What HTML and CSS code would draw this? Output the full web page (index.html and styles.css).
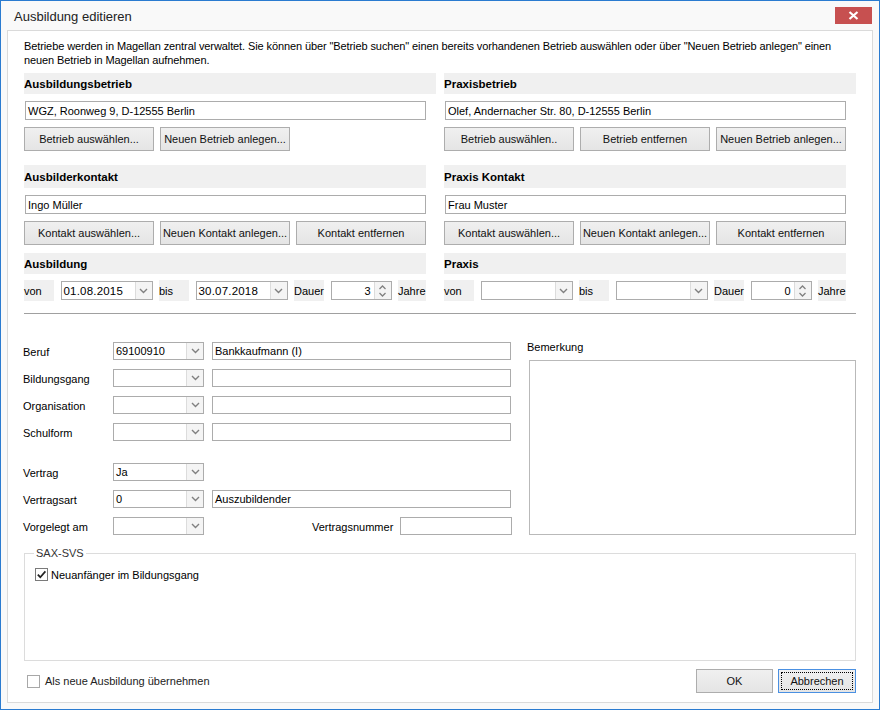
FILE: index.html
```html
<!DOCTYPE html>
<html lang="de">
<head>
<meta charset="utf-8">
<title>Ausbildung editieren</title>
<link rel="stylesheet" href="styles.css">
</head>
<body>
<div class="window">
  <div class="titlebar">
    <span class="title">Ausbildung editieren</span>
    <div class="close"><svg width="11" height="9" viewBox="0 0 11 9"><path d="M1.5 1 L9.5 8 M9.5 1 L1.5 8" stroke="#fff" stroke-width="2.2" fill="none"/></svg></div>
  </div>
  <div class="panel">
    <p class="intro">Betriebe werden in Magellan zentral verwaltet. Sie können über "Betrieb suchen" einen bereits vorhandenen Betrieb auswählen oder über "Neuen Betrieb anlegen" einen<br>neuen Betrieb in Magellan aufnehmen.</p>

    <div class="cols">
      <div class="col">
        <div class="band wide">Ausbildungsbetrieb</div>
        <div class="textbox">WGZ, Roonweg 9, D-12555 Berlin</div>
        <div class="btnrow">
          <div class="btn">Betrieb auswählen...</div>
          <div class="btn">Neuen Betrieb anlegen...</div>
        </div>
        <div class="band second">Ausbilderkontakt</div>
        <div class="textbox">Ingo Müller</div>
        <div class="btnrow">
          <div class="btn">Kontakt auswählen...</div>
          <div class="btn">Neuen Kontakt anlegen...</div>
          <div class="btn">Kontakt entfernen</div>
        </div>
        <div class="band third">Ausbildung</div>
        <div class="daterow">
          <span class="lbl l-von">von</span>
          <div class="combo date"><span class="val">01.08.2015</span><span class="arrow"><svg width="9" height="6" viewBox="0 0 9 6"><path d="M1 1 L4.5 4.5 L8 1" stroke="#808080" stroke-width="1.4" fill="none"/></svg></span></div>
          <span class="lbl l-bis">bis</span>
          <div class="combo date"><span class="val">30.07.2018</span><span class="arrow"><svg width="9" height="6" viewBox="0 0 9 6"><path d="M1 1 L4.5 4.5 L8 1" stroke="#808080" stroke-width="1.4" fill="none"/></svg></span></div>
          <span class="lbl l-dauer">Dauer</span>
          <div class="spin"><span class="val">3</span><span class="spinbtn"><svg width="9" height="14" viewBox="0 0 9 14"><path d="M1.5 5 L4.5 2 L7.5 5 M1.5 9 L4.5 12 L7.5 9" stroke="#808080" stroke-width="1.3" fill="none"/></svg></span></div>
          <span class="lbl l-jahre">Jahre</span>
        </div>
      </div>

      <div class="col">
        <div class="band wide">Praxisbetrieb</div>
        <div class="textbox">Olef, Andernacher Str. 80, D-12555 Berlin</div>
        <div class="btnrow">
          <div class="btn">Betrieb auswählen..</div>
          <div class="btn">Betrieb entfernen</div>
          <div class="btn">Neuen Betrieb anlegen...</div>
        </div>
        <div class="band second">Praxis Kontakt</div>
        <div class="textbox">Frau Muster</div>
        <div class="btnrow">
          <div class="btn">Kontakt auswählen...</div>
          <div class="btn">Neuen Kontakt anlegen...</div>
          <div class="btn">Kontakt entfernen</div>
        </div>
        <div class="band third">Praxis</div>
        <div class="daterow">
          <span class="lbl l-von">von</span>
          <div class="combo date"><span class="val"></span><span class="arrow"><svg width="9" height="6" viewBox="0 0 9 6"><path d="M1 1 L4.5 4.5 L8 1" stroke="#808080" stroke-width="1.4" fill="none"/></svg></span></div>
          <span class="lbl l-bis">bis</span>
          <div class="combo date"><span class="val"></span><span class="arrow"><svg width="9" height="6" viewBox="0 0 9 6"><path d="M1 1 L4.5 4.5 L8 1" stroke="#808080" stroke-width="1.4" fill="none"/></svg></span></div>
          <span class="lbl l-dauer">Dauer</span>
          <div class="spin"><span class="val">0</span><span class="spinbtn"><svg width="9" height="14" viewBox="0 0 9 14"><path d="M1.5 5 L4.5 2 L7.5 5 M1.5 9 L4.5 12 L7.5 9" stroke="#808080" stroke-width="1.3" fill="none"/></svg></span></div>
          <span class="lbl l-jahre">Jahre</span>
        </div>
      </div>
    </div>

    <div class="sep"></div>

    <div class="lower">
      <div class="form">
        <div class="frow">
          <span class="flabel">Beruf</span>
          <div class="combo small"><span class="val">69100910</span><span class="arrow"><svg width="9" height="6" viewBox="0 0 9 6"><path d="M1 1 L4.5 4.5 L8 1" stroke="#808080" stroke-width="1.4" fill="none"/></svg></span></div>
          <div class="field wide">Bankkaufmann (I)</div>
        </div>
        <div class="frow">
          <span class="flabel">Bildungsgang</span>
          <div class="combo small"><span class="val"></span><span class="arrow"><svg width="9" height="6" viewBox="0 0 9 6"><path d="M1 1 L4.5 4.5 L8 1" stroke="#808080" stroke-width="1.4" fill="none"/></svg></span></div>
          <div class="field wide"></div>
        </div>
        <div class="frow">
          <span class="flabel">Organisation</span>
          <div class="combo small"><span class="val"></span><span class="arrow"><svg width="9" height="6" viewBox="0 0 9 6"><path d="M1 1 L4.5 4.5 L8 1" stroke="#808080" stroke-width="1.4" fill="none"/></svg></span></div>
          <div class="field wide"></div>
        </div>
        <div class="frow">
          <span class="flabel">Schulform</span>
          <div class="combo small"><span class="val"></span><span class="arrow"><svg width="9" height="6" viewBox="0 0 9 6"><path d="M1 1 L4.5 4.5 L8 1" stroke="#808080" stroke-width="1.4" fill="none"/></svg></span></div>
          <div class="field wide"></div>
        </div>
        <div class="frow spaced">
          <span class="flabel">Vertrag</span>
          <div class="combo small"><span class="val">Ja</span><span class="arrow"><svg width="9" height="6" viewBox="0 0 9 6"><path d="M1 1 L4.5 4.5 L8 1" stroke="#808080" stroke-width="1.4" fill="none"/></svg></span></div>
        </div>
        <div class="frow">
          <span class="flabel">Vertragsart</span>
          <div class="combo small"><span class="val">0</span><span class="arrow"><svg width="9" height="6" viewBox="0 0 9 6"><path d="M1 1 L4.5 4.5 L8 1" stroke="#808080" stroke-width="1.4" fill="none"/></svg></span></div>
          <div class="field wide">Auszubildender</div>
        </div>
        <div class="frow">
          <span class="flabel">Vorgelegt am</span>
          <div class="combo small"><span class="val"></span><span class="arrow"><svg width="9" height="6" viewBox="0 0 9 6"><path d="M1 1 L4.5 4.5 L8 1" stroke="#808080" stroke-width="1.4" fill="none"/></svg></span></div>
          <span class="vnlabel">Vertragsnummer</span>
          <div class="field vn"></div>
        </div>
      </div>
      <div class="remark">
        <span class="rlabel">Bemerkung</span>
        <div class="textarea"></div>
      </div>
    </div>

    <div class="group">
      <span class="legend">SAX-SVS</span>
      <div class="check-row">
        <span class="cbox checked"><svg width="11" height="11" viewBox="0 0 11 11"><path d="M1.8 5.6 L4.3 8.2 L9.4 2.4" stroke="#222" stroke-width="1.7" fill="none"/></svg></span>
        <span class="clabel">Neuanfänger im Bildungsgang</span>
      </div>
    </div>

    <div class="footer">
      <span class="cbox"></span>
      <span class="clabel foot">Als neue Ausbildung übernehmen</span>
      <div class="btn dlg ok">OK</div>
      <div class="btn dlg cancel"><span class="focus">Abbrechen</span></div>
    </div>
  </div>
</div>
</body>
</html>
```

FILE: styles.css
```css
* { box-sizing: border-box; }
html, body { margin: 0; padding: 0; }
body {
  font-family: "Liberation Sans", Arial, sans-serif;
  font-size: 11px;
  color: #000;
  background: #fff;
}
.window {
  width: 880px;
  height: 710px;
  border: 1px solid #2a7bd0;
  background: #f9f9f9;
  display: flex;
  flex-direction: column;
}
.titlebar {
  flex: none;
  height: 29px;
  display: flex;
  justify-content: space-between;
  align-items: flex-start;
}
.title {
  font-size: 13px;
  line-height: 15px;
  color: #222;
  padding: 8px 0 0 13px;
}
.close {
  width: 37px;
  height: 17px;
  margin: 6px 7px 0 0;
  background: #c75050;
  display: flex;
  align-items: center;
  justify-content: center;
}
.panel {
  flex: 1;
  margin: 0 6px 6px 6px;
  border: 1px solid #dadada;
  background: #fff;
  padding: 8px 16px 0 16px;
  display: flex;
  flex-direction: column;
}
.intro {
  margin: 0;
  line-height: 14px;
  letter-spacing: -0.1px;
}
.cols {
  display: flex;
  gap: 18px;
  margin-top: 6px;
}
.col {
  width: 402px;
  display: flex;
  flex-direction: column;
}
.band {
  height: 21px;
  background: #f0f0f0;
  font-weight: bold;
  font-size: 11.5px;
  display: flex;
  align-items: center;
}
.band.wide { margin-right: -10px; }
.band.second { margin-top: 14px; height: 23px; }
.band.third { margin-top: 8px; }
.textbox {
  margin: 7px 0 0 1px;
  height: 19px;
  border: 1px solid #acacac;
  background: #fff;
  padding-left: 2px;
  display: flex;
  align-items: center;
}
.btnrow {
  display: flex;
  gap: 6px;
  margin-top: 7px;
}
.btn {
  width: 130px;
  height: 24px;
  border: 1px solid #adadad;
  background: linear-gradient(#f0f0f0, #e5e5e5);
  display: flex;
  align-items: center;
  justify-content: center;
  color: #111;
  white-space: nowrap;
}
.daterow {
  margin-top: 6px;
  height: 21px;
  display: flex;
  align-items: center;
  justify-content: space-between;
}
.lbl {
  height: 21px;
  background: #f0f0f0;
  display: flex;
  align-items: center;
}
.l-von { width: 30px; }
.l-bis { width: 30px; }
.l-dauer { width: 30px; }
.l-jahre { width: 28px; }
.combo {
  height: 19px;
  border: 1px solid #acacac;
  background: #fff;
  display: flex;
}
.combo .val {
  flex: 1;
  padding-left: 2px;
  display: flex;
  align-items: center;
  white-space: nowrap;
}
.combo .arrow {
  width: 17px;
  border-left: 1px solid #dcdcdc;
  background: #f4f4f4;
  display: flex;
  align-items: center;
  justify-content: center;
}
.combo.date { width: 92px; }
.combo.date .val { font-size: 11.5px; letter-spacing: 0.2px; }
.spin {
  width: 61px;
  height: 19px;
  border: 1px solid #acacac;
  background: #fff;
  display: flex;
}
.spin .val {
  flex: 1;
  padding-right: 3px;
  display: flex;
  align-items: center;
  justify-content: flex-end;
}
.spinbtn {
  width: 17px;
  border-left: 1px solid #dcdcdc;
  background: #f4f4f4;
  display: flex;
  align-items: center;
  justify-content: center;
}
.sep {
  margin-top: 12px;
  height: 1px;
  background: #a0a0a0;
}
.lower {
  margin-top: 26px;
  display: flex;
  justify-content: space-between;
}
.form {
  width: 488px;
  padding-top: 2px;
  display: flex;
  flex-direction: column;
}
.frow {
  height: 18px;
  display: flex;
  align-items: center;
  margin-top: 9px;
}
.frow:first-child { margin-top: 0; }
.frow.spaced { margin-top: 22px; }
.flabel {
  width: 90px;
  margin-left: -1px;
  padding-top: 2px;
}
.combo.small {
  width: 91px;
  height: 18px;
}
.field {
  height: 18px;
  border: 1px solid #acacac;
  background: #fff;
  padding-left: 2px;
  display: flex;
  align-items: center;
}
.field.wide {
  width: 299px;
  margin-left: 8px;
}
.vnlabel {
  margin-left: 108px;
  width: 88px;
  padding-top: 2px;
}
.field.vn { width: 112px; }
.remark {
  width: 327px;
  display: flex;
  flex-direction: column;
}
.rlabel {
  height: 14px;
  line-height: 14px;
  margin-left: -2px;
}
.textarea {
  margin-top: 6px;
  height: 175px;
  border: 1px solid #b9b9b9;
  background: #fff;
}
.group {
  position: relative;
  margin-top: 18px;
  height: 108px;
  border: 1px solid #dcdcdc;
  padding: 14px 10px 0 10px;
}
.legend {
  position: absolute;
  top: -8px;
  left: 9px;
  padding: 0 2px;
  background: #fff;
  color: #333;
  line-height: 14px;
}
.check-row {
  display: flex;
  align-items: center;
}
.cbox {
  width: 13px;
  height: 13px;
  border: 1px solid #a8a8a8;
  background: #fff;
  display: flex;
  align-items: center;
  justify-content: center;
  flex: none;
}
.cbox.checked { border-color: #7a7a7a; }
.clabel { margin-left: 3px; }
.footer {
  margin-top: 8px;
  height: 24px;
  display: flex;
  align-items: center;
}
.footer .cbox { margin-left: 3px; }
.clabel.foot { margin-left: 5px; color: #222; }
.btn.dlg { width: 77px; }
.btn.ok { margin-left: auto; }
.btn.cancel {
  margin-left: 5px;
  width: 78px;
  border-color: #4a90e2;
  padding: 2px;
  align-items: stretch;
  justify-content: stretch;
}
.focus {
  flex: 1;
  border: 1px dotted #000;
  display: flex;
  align-items: center;
  justify-content: center;
}
```
